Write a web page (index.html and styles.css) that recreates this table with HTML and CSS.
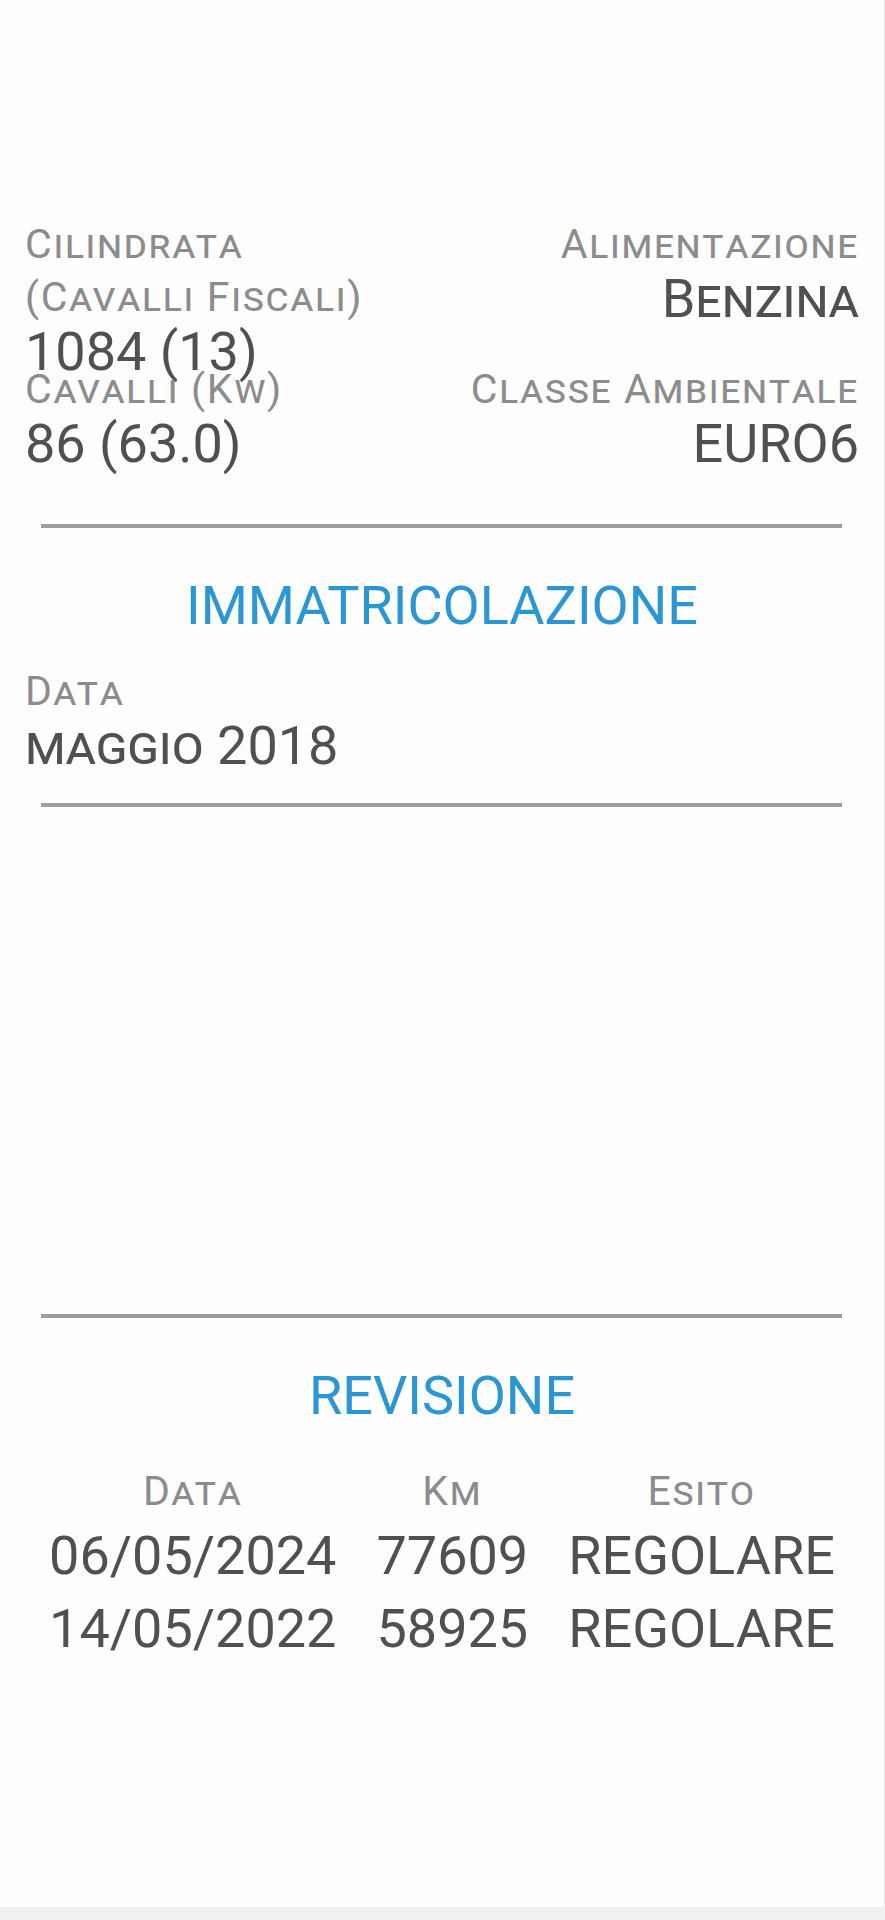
FILE: index.html
```html
<!DOCTYPE html>
<html lang="it">
<head>
    <meta charset="UTF-8">
    <meta name="viewport" content="width=device-width, initial-scale=1.0">
    <title>Dati veicolo</title>
    <link rel="stylesheet" href="styles.css">
</head>
<body>
    <div class="page">
        <div class="specs">
            <div class="spec">
                <div class="label">Cilindrata (Cavalli Fiscali)</div>
                <div class="value">1084 (13)</div>
            </div>
            <div class="spec right">
                <div class="label">Alimentazione</div>
                <div class="value">Benzina</div>
            </div>
            <div class="spec">
                <div class="label">Cavalli (Kw)</div>
                <div class="value">86 (63.0)</div>
            </div>
            <div class="spec right">
                <div class="label">Classe Ambientale</div>
                <div class="value">EURO6</div>
            </div>
        </div>

        <hr class="divider">

        <div class="section">
            <h2 class="section-title">IMMATRICOLAZIONE</h2>
            <div class="label">Data</div>
            <div class="value">maggio 2018</div>
        </div>

        <hr class="divider">

        <div class="empty-area"></div>

        <hr class="divider">

        <div class="section">
            <h2 class="section-title">REVISIONE</h2>
            <table class="revisions">
                <thead>
                    <tr>
                        <th>Data</th>
                        <th>Km</th>
                        <th>Esito</th>
                    </tr>
                </thead>
                <tbody>
                    <tr>
                        <td>06/05/2024</td>
                        <td>77609</td>
                        <td>REGOLARE</td>
                    </tr>
                    <tr>
                        <td>14/05/2022</td>
                        <td>58925</td>
                        <td>REGOLARE</td>
                    </tr>
                </tbody>
            </table>
        </div>
    </div>
</body>
</html>
```

FILE: styles.css
```css
body {
    margin: 0;
    background-color: #f0f0f3;
    font-family: Roboto, "Noto Sans", sans-serif;
}

.page {
    background-color: #fefefe;
    height: 1907px;
    padding: 216px 25px 0;
    box-sizing: border-box;
    border-right: 1px solid #e8e8ea;
}

.specs {
    display: grid;
    grid-template-columns: 45% 55%;
    grid-auto-rows: 145px;
}

.spec.right {
    text-align: right;
}

.label {
    font-size: 41px;
    line-height: 53px;
    letter-spacing: 1.7px;
    font-variant: small-caps;
    color: #8c8c8c;
    padding-top: 2px;
    margin-bottom: -2px;
}

.value {
    font-size: 54px;
    line-height: 60px;
    font-variant: small-caps;
    color: #505050;
}

.divider {
    border: none;
    height: 4px;
    background-color: #9e9e9e;
    margin: 18px 17px 0 16px;
}

.section-title {
    font-size: 54px;
    font-weight: normal;
    line-height: normal;
    color: #2a97d4;
    text-align: center;
    margin: 46px 0 26px;
}

.section .value {
    margin-bottom: 27px;
}

.empty-area {
    height: 489px;
}

.revisions {
    margin: 36px auto 0;
    border-collapse: collapse;
}

.revisions th {
    font-size: 41px;
    line-height: 56px;
    letter-spacing: 1.7px;
    font-weight: normal;
    font-variant: small-caps;
    color: #8c8c8c;
    padding: 0 20px;
}

.revisions td {
    font-size: 54px;
    line-height: 73px;
    color: #505050;
    text-align: center;
    padding: 0 20px;
}
```
